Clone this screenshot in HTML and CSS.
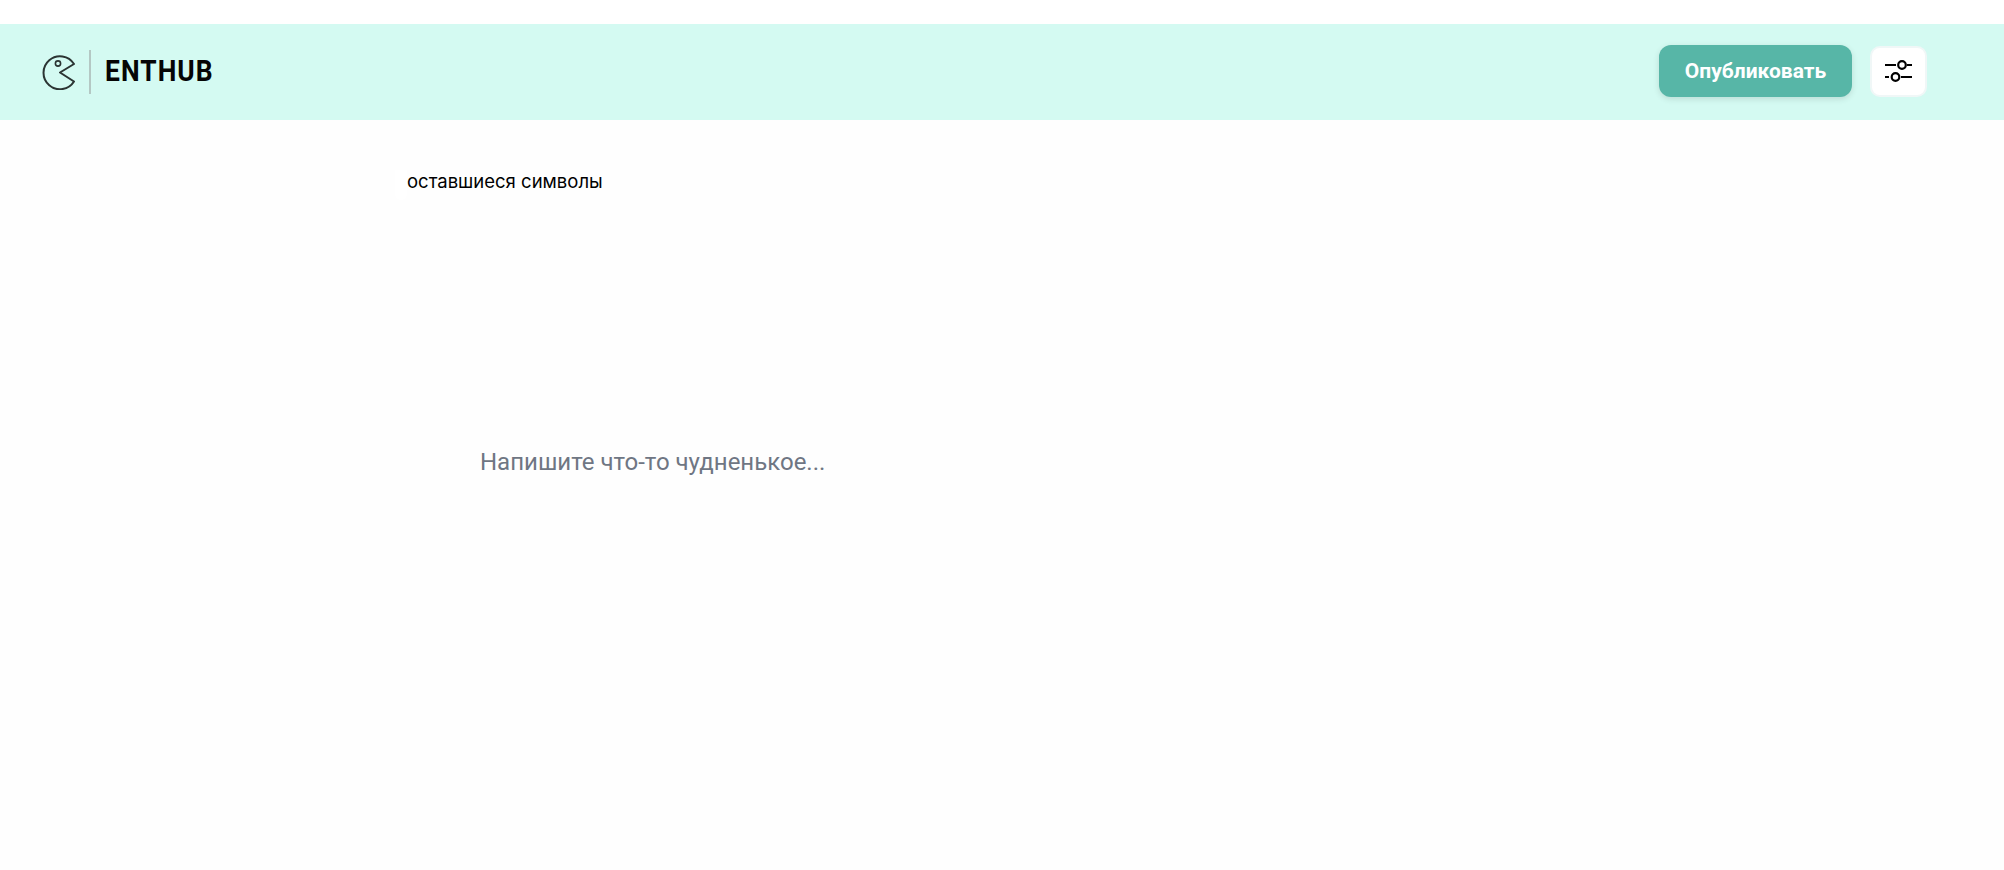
FILE: index.html
```html
<!DOCTYPE html>
<html lang="ru">
<head>
<meta charset="utf-8">
<title>ENTHUB</title>
<link rel="stylesheet" href="styles.css">
</head>
<body>
<div class="page">
  <header class="header">
    <div class="brand">
      <svg class="pac" viewBox="0 0 36 36" width="36" height="36" fill="none" stroke="#2b3433" stroke-width="2" stroke-linejoin="round" stroke-linecap="round">
        <path d="M33 10 A16.5 16.5 0 1 0 33 27.5 L19 18.5 Z"/>
        <circle cx="17" cy="9.5" r="2.6" stroke-width="1.6"/>
      </svg>
      <span class="divider"></span>
      <span class="wordmark">ENTHUB</span>
    </div>
    <div class="actions">
      <button class="publish">Опубликовать</button>
      <button class="settings" aria-label="Настройки">
        <svg viewBox="0 0 28 24" width="28" height="24" fill="none" stroke="#000" stroke-width="2.2">
          <path d="M0 6h11M22 6h5M0 18h4M16 18h11"/>
          <circle cx="17" cy="6" r="3.8"/>
          <circle cx="10.500" cy="18" r="3.8"/>
        </svg>
      </button>
    </div>
  </header>
  <main class="content">
    <div class="counter"><span class="nub"></span><span>оставшиеся символы</span></div>
    <div class="placeholder">Напишите что-то чудненькое...</div>
  </main>
</div>
</body>
</html>
```
FILE: styles.css
```css
html, body { margin: 0; height: 100%; }
body { background: #fefefe; font-family: Roboto, "Liberation Sans", sans-serif; overflow: hidden; }
.page { padding-top: 24px; background: linear-gradient(#fff 24px, transparent 24px); }
.header { height: 96px; background: #d4faf2; display: flex; align-items: center; justify-content: space-between; padding: 0 77px 2px 41px; box-sizing: border-box; }
.brand { display: flex; align-items: center; margin-top: 2px; }
.pac { display: block; }
.divider { width: 2px; height: 44px; background: #b4c8c4; margin-left: 12px; margin-right: 14px; }
.wordmark { font-size: 30px; font-weight: 700; line-height: 30px; padding-bottom: 2px; color: #050505; letter-spacing: 1.2px; transform: scaleX(.88); transform-origin: left center; width: 107px; }
.actions { display: flex; align-items: center; gap: 18px; }
.publish { width: 193px; height: 52px; border: 0; border-radius: 12px; background: #57b6a7; color: #fff; font: 700 21px Roboto, sans-serif; box-shadow: 0 2px 6px rgba(0,0,0,.12); padding: 0; }
.settings { width: 57px; height: 51px; background: #fff; border: 2px solid #f0f7f7; border-radius: 10px; padding: 0; display: flex; align-items: center; justify-content: center; }
.settings svg { display: block; }
.content { padding: 50px 0 0 395px; }
.counter { display: flex; align-items: flex-start; height: 30px; font: 18.5px/22px Inter, "Liberation Sans", sans-serif; color: #000; }
.nub { width: 12px; height: 30px; background: #fff; border-radius: 0 0 8px 8px; }
.placeholder { margin: 247px 0 0 85px; font-size: 24px; line-height: 30px; color: #6f7683; }
```
